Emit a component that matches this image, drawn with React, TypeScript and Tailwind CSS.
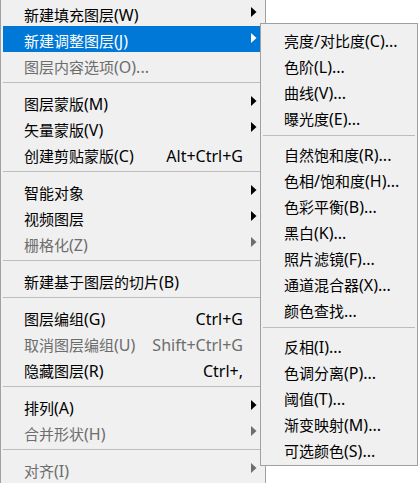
type Item = { label: string; shortcut?: string; arrow?: boolean; disabled?: boolean; active?: boolean } | "sep"

const mainItems: Item[] = [
  { label: "新建填充图层(W)", arrow: true },
  { label: "新建调整图层(J)", arrow: true, active: true },
  { label: "图层内容选项(O)...", disabled: true },
  "sep",
  { label: "图层蒙版(M)", arrow: true },
  { label: "矢量蒙版(V)", arrow: true },
  { label: "创建剪贴蒙版(C)", shortcut: "Alt+Ctrl+G" },
  "sep",
  { label: "智能对象", arrow: true },
  { label: "视频图层", arrow: true },
  { label: "栅格化(Z)", arrow: true, disabled: true },
  "sep",
  { label: "新建基于图层的切片(B)" },
  "sep",
  { label: "图层编组(G)", shortcut: "Ctrl+G" },
  { label: "取消图层编组(U)", shortcut: "Shift+Ctrl+G", disabled: true },
  { label: "隐藏图层(R)", shortcut: "Ctrl+," },
  "sep",
  { label: "排列(A)", arrow: true },
  { label: "合并形状(H)", arrow: true, disabled: true },
  "sep",
  { label: "对齐(I)", arrow: true, disabled: true },
]

const subItems: Item[] = [
  { label: "亮度/对比度(C)..." },
  { label: "色阶(L)..." },
  { label: "曲线(V)..." },
  { label: "曝光度(E)..." },
  "sep",
  { label: "自然饱和度(R)..." },
  { label: "色相/饱和度(H)..." },
  { label: "色彩平衡(B)..." },
  { label: "黑白(K)..." },
  { label: "照片滤镜(F)..." },
  { label: "通道混合器(X)..." },
  { label: "颜色查找..." },
  "sep",
  { label: "反相(I)..." },
  { label: "色调分离(P)..." },
  { label: "阈值(T)..." },
  { label: "渐变映射(M)..." },
  { label: "可选颜色(S)..." },
]

// latin runs a touch bigger so they match the Segoe-style widths
const Txt = ({ text }: { text: string }) => {
  const parts = text.split(/([\u4e00-\u9fff]+)/).filter((p) => p)
  return (
    <>
      {parts.map((p, i) =>
        /[\u4e00-\u9fff]/.test(p) ? (
          <span key={i} className="text-[15px]">{p}</span>
        ) : (
          <span key={i} className="text-[16px]">{p}</span>
        )
      )}
    </>
  )
}

const Arrow = ({ color }: { color: string }) => (
  <svg width="6" height="10" viewBox="0 0 6 10" className="ml-[8px] mt-[7px] self-start">
    <polygon points="0,0 5.5,5 0,10" fill={color} />
  </svg>
)

const Row = ({ item }: { item: Exclude<Item, "sep"> }) => {
  const color = item.active ? "text-white" : item.disabled ? "text-[#6d6d6d]" : "text-black"
  const bg = item.active ? "bg-[#0078d7]" : ""
  const arrowColor = item.active ? "#ffffff" : item.disabled ? "#6d6d6d" : "#000000"
  return (
    <div className={`flex h-[26px] items-center ${bg} ${color}`}>
      <div className="mt-1 flex-1 whitespace-nowrap pl-[21px] leading-none">
        <Txt text={item.label} />
      </div>
      {item.shortcut && (
        <div className="mt-1 whitespace-nowrap text-[16px] leading-none">{item.shortcut}</div>
      )}
      <div className="flex h-full w-[20px]">{item.arrow && <Arrow color={arrowColor} />}</div>
    </div>
  )
}

export default function App() {
  return (
    <div className="relative h-[483px] w-[419px] overflow-hidden bg-white font-['Noto_Sans','Noto_Sans_CJK_SC',sans-serif]">
      <div className="w-[266px] border-x border-[#a0a0a0] bg-[#f0f0f0] px-[2px] pb-[10px]">
        {mainItems.map((it, i) =>
          it === "sep" ? (
            <div key={i} className="h-[11px] pt-[4px]">
              <div className="h-px bg-[#bcbcbc]" />
            </div>
          ) : (
            <Row key={i} item={it} />
          )
        )}
      </div>

      <div className="absolute left-[260px] top-[23px] w-[158px] border border-[#a0a0a0] bg-[#f0f0f0] px-[2px] pb-[3px] pt-[2px]">
        {subItems.map((it, i) =>
          it === "sep" ? (
            <div key={i} className="h-[10px] pt-[5px]">
              <div className="h-px bg-[#bcbcbc]" />
            </div>
          ) : (
            <Row key={i} item={it} />
          )
        )}
      </div>
    </div>
  )
}
